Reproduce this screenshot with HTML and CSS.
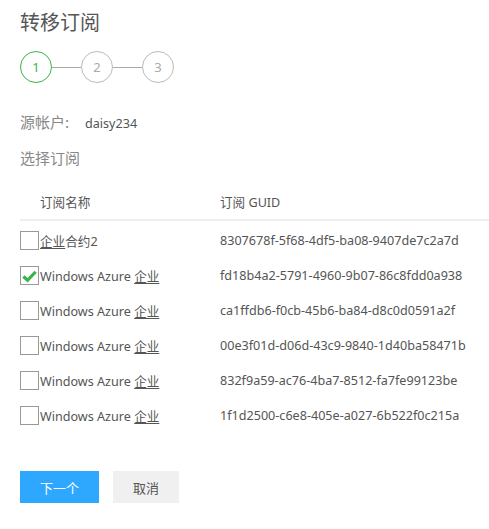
FILE: index.html
```html
<!DOCTYPE html>
<html lang="zh">
<head>
<meta charset="utf-8">
<link rel="stylesheet" href="styles.css">
</head>
<body>
<div class="page">
  <h1 class="title">转移订阅</h1>
  <div class="steps">
    <div class="step active">1</div>
    <div class="step-line"></div>
    <div class="step">2</div>
    <div class="step-line"></div>
    <div class="step">3</div>
  </div>
  <div class="source"><span class="label">源帐户:</span><span class="value">daisy234</span></div>
  <div class="section">选择订阅</div>
  <div class="table">
    <div class="thead">
      <div class="c1">订阅名称</div>
      <div class="c2">订阅 GUID</div>
    </div>
    <div class="row">
      <div class="c1"><span class="cb"></span><span class="name"><u>企业</u>合约2</span></div>
      <div class="c2">8307678f-5f68-4df5-ba08-9407de7c2a7d</div>
    </div>
    <div class="row">
      <div class="c1"><span class="cb checked"><svg viewBox="0 0 18 18" width="18" height="18"><path d="M2.5 9.5 L7 13.5 L15.5 4.5" fill="none" stroke="#3bb54a" stroke-width="3.4" stroke-linejoin="miter"/></svg></span><span class="name">Windows Azure <u>企业</u></span></div>
      <div class="c2">fd18b4a2-5791-4960-9b07-86c8fdd0a938</div>
    </div>
    <div class="row">
      <div class="c1"><span class="cb"></span><span class="name">Windows Azure <u>企业</u></span></div>
      <div class="c2">ca1ffdb6-f0cb-45b6-ba84-d8c0d0591a2f</div>
    </div>
    <div class="row">
      <div class="c1"><span class="cb"></span><span class="name">Windows Azure <u>企业</u></span></div>
      <div class="c2">00e3f01d-d06d-43c9-9840-1d40ba58471b</div>
    </div>
    <div class="row">
      <div class="c1"><span class="cb"></span><span class="name">Windows Azure <u>企业</u></span></div>
      <div class="c2">832f9a59-ac76-4ba7-8512-fa7fe99123be</div>
    </div>
    <div class="row">
      <div class="c1"><span class="cb"></span><span class="name">Windows Azure <u>企业</u></span></div>
      <div class="c2">1f1d2500-c6e8-405e-a027-6b522f0c215a</div>
    </div>
  </div>
  <div class="actions">
    <button class="btn primary">下一个</button>
    <button class="btn secondary">取消</button>
  </div>
</div>
</body>
</html>
```
FILE: styles.css
```css
html, body {
  margin: 0;
  padding: 0;
  background: #fff;
}
body {
  font-family: "Noto Sans", "Noto Sans CJK SC", sans-serif;
  color: #555;
}
.page {
  padding: 8px 0 0 20px;
}
.title {
  margin: 0;
  font-size: 20px;
  font-weight: normal;
  line-height: 28px;
  color: #555;
  font-family: "Noto Sans CJK SC", sans-serif;
}
.steps {
  display: flex;
  align-items: center;
  margin-top: 15px;
}
.step {
  width: 30px;
  height: 30px;
  border: 1px solid #bbb;
  border-radius: 50%;
  display: flex;
  align-items: center;
  justify-content: center;
  font-size: 13px;
  color: #aaa;
}
.step.active {
  border-color: #3bb54a;
  color: #3bb54a;
}
.step-line {
  width: 29px;
  height: 1px;
  background: #aaa;
}
.source {
  margin-top: 28px;
  display: flex;
  align-items: baseline;
  height: 22px;
}
.source .label {
  font-family: "Noto Sans CJK SC", sans-serif;
  font-size: 15px;
  color: #888;
  width: 65px;
}
.source .value {
  font-size: 12.6px;
  color: #555;
}
.section {
  margin-top: 14px;
  font-family: "Noto Sans CJK SC", sans-serif;
  font-size: 15px;
  color: #888;
  line-height: 22px;
}
.table {
  margin-top: 14px;
}
.thead {
  display: flex;
  height: 36px;
  align-items: center;
  border-bottom: 2px solid #eee;
  font-size: 12.6px;
  color: #555;
}
.thead .c1 {
  padding-left: 20px;
}
.c1 {
  box-sizing: border-box;
  width: 200px;
  display: flex;
  align-items: center;
}
.c2 {
  flex: 1;
}
.row {
  display: flex;
  align-items: center;
  height: 35px;
  font-size: 12.6px;
  color: #555;
}
.thead + .row {
  margin-top: 2px;
}
.cb {
  box-sizing: border-box;
  width: 19px;
  height: 19px;
  border: 1px solid #999;
  background: #fff;
  display: inline-flex;
  align-items: center;
  justify-content: center;
  flex: none;
}
.cb svg {
  display: block;
}
.name {
  margin-left: 1px;
}
.name u {
  text-decoration: underline;
  text-underline-offset: 2px;
}
.actions {
  display: flex;
  gap: 14px;
  margin-top: 38px;
}
.btn {
  height: 32px;
  border: none;
  font-family: "Noto Sans CJK SC", sans-serif;
  font-size: 13px;
  cursor: pointer;
}
.btn.primary {
  width: 79px;
  background: #2ea8ff;
  color: #fff;
}
.btn.secondary {
  width: 66px;
  background: #f0f0f0;
  color: #555;
}
```
